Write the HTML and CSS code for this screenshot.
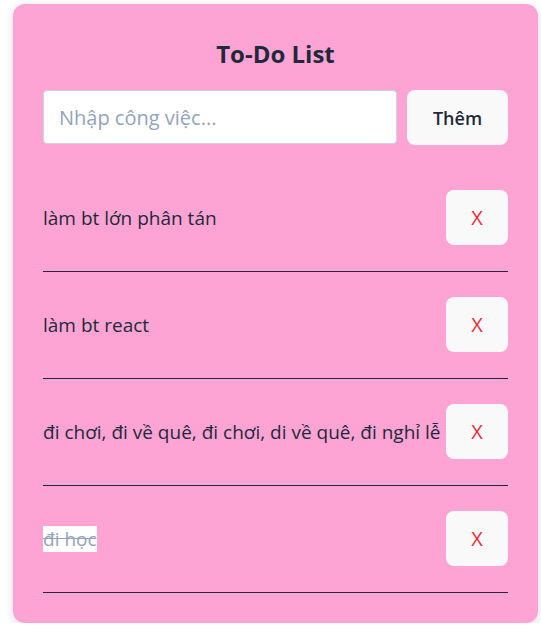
FILE: index.html
```html
<!DOCTYPE html>
<html>
<head>
    <title>To-Do List</title>
    <link rel="stylesheet" href="styles.css">
</head>
<body>
    <div class="todo-card">
        <h1>To-Do List</h1>

        <div class="add-row">
            <input type="text" class="task-input" placeholder="Nhập công việc...">
            <button class="add-btn">Thêm</button>
        </div>

        <ul class="todo-list">
            <li class="todo-item">
                <span class="todo-text">làm bt lớn phân tán</span>
                <button class="delete-btn">X</button>
            </li>
            <li class="todo-item">
                <span class="todo-text">làm bt react</span>
                <button class="delete-btn">X</button>
            </li>
            <li class="todo-item">
                <span class="todo-text">đi chơi, đi về quê, đi chơi, di về quê, đi nghỉ lễ</span>
                <button class="delete-btn">X</button>
            </li>
            <li class="todo-item">
                <span class="todo-text done">đi học</span>
                <button class="delete-btn">X</button>
            </li>
        </ul>
    </div>
</body>
</html>
```

FILE: styles.css
```css
body {
    font-family: "Open Sans", sans-serif;
    margin: 0;
    padding: 4px 3px 0 13px;
    background: #fff;
    color: #1e293b;
}

.todo-card {
    background-color: #fda4d4;
    border-radius: 12px;
    box-shadow: 0 2px 8px rgba(0, 0, 0, 0.15);
    padding: 24px 30px 30px;
    width: 465px;
}

h1 {
    text-align: center;
    font-size: 24px;
    font-weight: bold;
    margin: 10px 0 20px;
    line-height: 32px;
}

.add-row {
    display: flex;
    gap: 10px;
}

.task-input {
    flex: 1;
    height: 54px;
    box-sizing: border-box;
    padding: 0 15px;
    font-family: inherit;
    font-size: 20px;
    border: 1px solid #cbd5e1;
    border-radius: 4px;
    background: #fff;
}

.task-input::placeholder {
    color: #94a3b8;
}

.add-btn {
    width: 101px;
    height: 55px;
    border: none;
    border-radius: 8px;
    background: #f9f9f9;
    font-family: inherit;
    font-size: 18px;
    font-weight: 600;
    color: #1e293b;
}

.todo-list {
    list-style: none;
    margin: 20px 0 0;
    padding: 0;
}

.todo-item {
    display: flex;
    align-items: center;
    justify-content: space-between;
    padding: 25px 0 26px;
    border-bottom: 1px solid #1e293b;
}

.todo-text {
    flex: 1;
    min-width: 0;
    white-space: nowrap;
    overflow: hidden;
    font-size: 19px;
}

.todo-text.done {
    flex: none;
    background: #fff;
    color: #94a3b8;
    text-decoration: line-through;
}

.delete-btn {
    width: 62px;
    height: 55px;
    flex: none;
    border: none;
    border-radius: 8px;
    background: #f9f9f9;
    color: #ef2b3b;
    font-family: inherit;
    font-size: 20px;
}
```
